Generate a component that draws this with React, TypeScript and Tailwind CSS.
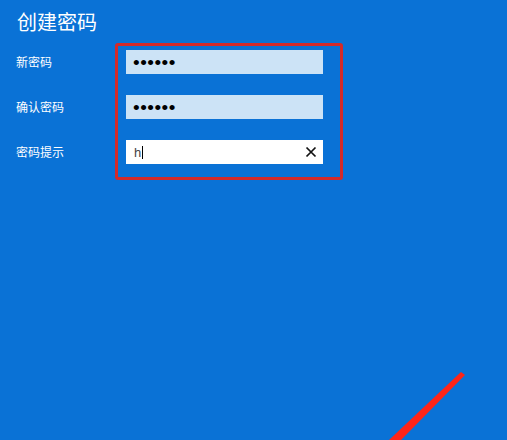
import React from 'react';

const fields = [
  { label: '新密码', kind: 'masked' },
  { label: '确认密码', kind: 'masked' },
  { label: '密码提示', kind: 'hint' },
];

const App: React.FC = () => {
  return (
    <div className="relative w-[507px] h-[440px] overflow-hidden bg-[#0a72d6] text-white font-['Noto_Sans_CJK_SC','Noto_Sans',sans-serif]">
      <h1 className="pl-[17px] pt-[9px] text-[20px] leading-[26px] font-normal">创建密码</h1>

      <div className="mt-[8px] flex">
        <div className="w-[115px] pl-[16px] pt-[7px] flex flex-col gap-[21px]">
          {fields.map((f) => (
            <div key={f.label} className="h-[24px] flex items-center text-[12px]">
              {f.label}
            </div>
          ))}
        </div>

        <div className="w-[228px] border-[3px] border-[#d42a2a] rounded-[3px] pt-[4px] pb-[13px] pl-[8px] pr-[17px] flex flex-col gap-[21px]">
          {fields.map((f) =>
            f.kind === 'masked' ? (
              <div key={f.label} className="h-[24px] bg-[#cce3f6] flex items-center pl-[7px]">
                <span className="text-black text-[19px] leading-none font-['Liberation_Sans',sans-serif] tracking-[0.5px]">
                  ••••••
                </span>
              </div>
            ) : (
              <div key={f.label} className="h-[24px] bg-white flex items-center pl-[8px] pr-[6px]">
                <span className="text-[#444] text-[13px] leading-none font-['Liberation_Sans',sans-serif]">h</span>
                <span className="ml-[1px] w-[1px] h-[13px] bg-black" />
                <svg className="ml-auto" width="12" height="12" viewBox="0 0 12 12">
                  <path d="M1.5 1.5 L10.5 10.5 M10.5 1.5 L1.5 10.5" stroke="#111" strokeWidth="1.7" />
                </svg>
              </div>
            )
          )}
        </div>
      </div>

      <svg className="absolute left-0 top-0 pointer-events-none" width="507" height="440" viewBox="0 0 507 440">
        <polygon points="461,372 465,375 401,440 389,440" fill="#ff2418" />
      </svg>
    </div>
  );
};

export default App;
